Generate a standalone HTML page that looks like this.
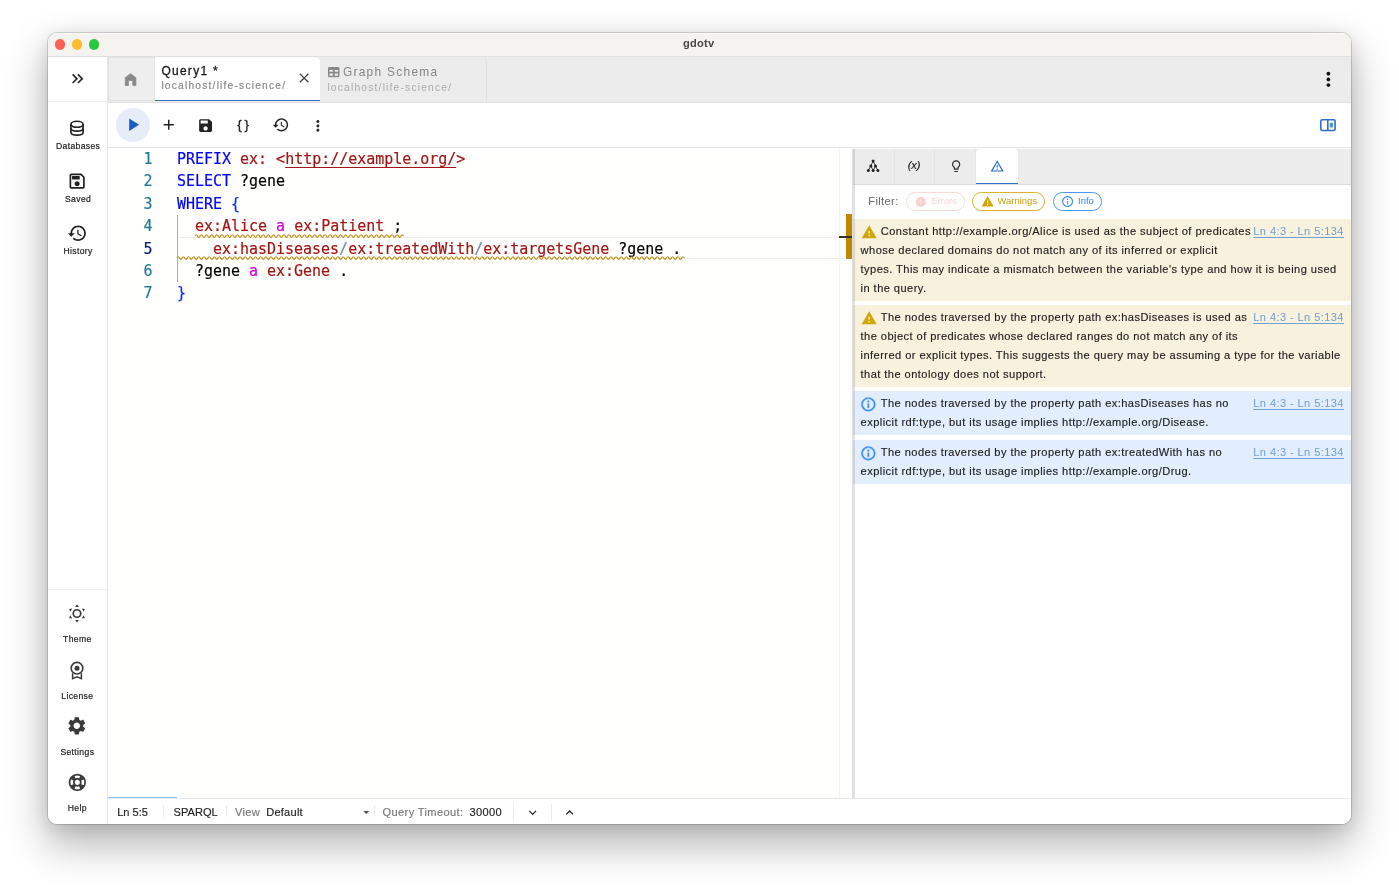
<!DOCTYPE html>
<html lang="en">
<head>
<meta charset="utf-8">
<title>gdotv</title>
<style>
*{box-sizing:border-box;margin:0;padding:0}
html,body{width:1399px;height:888px;overflow:hidden;background:#fff}
body{position:relative;font-family:"Liberation Sans",Arial,Helvetica,sans-serif;color:#222}
.abs{position:absolute}
svg{display:block;position:absolute;overflow:visible}
#win{position:absolute;left:48px;top:33px;width:1302.6px;height:790.6px;border-radius:9px;background:#fff;
  box-shadow:0 0 0 1px rgba(0,0,0,.14),0 19px 40px 2px rgba(0,0,0,.29),0 3px 18px rgba(0,0,0,.11);}
#clip{position:absolute;left:0;top:0;right:0;bottom:0;border-radius:9px;overflow:hidden}
#page{position:absolute;left:-48px;top:-33px;width:1399px;height:888px;will-change:transform}
#titlebar{left:48px;top:33px;width:1304px;height:23.5px;background:#f5f3ef;border-bottom:1px solid #e2e0dc;border-top:1px solid #fbfaf8}
.tl{position:absolute;top:39.3px;width:10.3px;height:10.3px;border-radius:50%}
#title{left:682.9px;top:37.2px;font-size:11.1px;font-weight:bold;color:#484848;line-height:13px;letter-spacing:.25px;white-space:nowrap}
#side{left:48px;top:56.5px;width:60.3px;height:768px;background:#fff;border-right:1.5px solid #e6e6e6}
.slabel{position:absolute;left:48.6px;width:59px;text-align:center;font-size:8.6px;letter-spacing:.36px;color:#222;-webkit-text-stroke:.2px #222;line-height:10px;white-space:nowrap}
#tabbar{left:108px;top:56.5px;width:1244px;height:46.1px;background:#ececec;border-bottom:1.5px solid #e0e0e0}
#hometab{left:108px;top:56.8px;width:46.5px;height:44.4px;background:#eeeeee;border:1.1px solid #e2e2e2}
#tab1{left:154.5px;top:57.2px;width:165.4px;height:43.9px;background:#fff;border-radius:0 5px 0 0;border-bottom:1.8px solid #3474c8}
#tab2{left:320.5px;top:57.2px;width:166px;height:43.6px;border-right:1px solid #e0e0e0;border-radius:0 5px 0 0}
.ttitle{position:absolute;font-size:11.95px;letter-spacing:1.3px;line-height:14px;white-space:nowrap}
.tsub{position:absolute;font-size:10.24px;letter-spacing:1.2px;line-height:12px;white-space:nowrap}
#toolbar{left:108px;top:102.5px;width:1244px;height:45.5px;background:#fff;border-bottom:1.3px solid #e3e3e3}
#playbg{left:116.2px;top:108.3px;width:33.4px;height:33.4px;border-radius:50%;background:#e6edf8}
#editor{left:108px;top:148.5px;width:745px;height:649px;background:#fffffe}
.mono{font-family:"DejaVu Sans Mono","Liberation Mono",monospace;font-size:14.96px;line-height:22.4px;white-space:pre;-webkit-text-stroke:.2px}
.ln{position:absolute;left:108px;width:44.5px;text-align:right;color:#237893}
.cl{position:absolute;left:177.05px;color:#000}
.k{color:#0000ff}.p{color:#a31515}.b{color:#0431fa}.a{color:#d400d4}.s{color:#7a8ba0}
.u{text-decoration:underline;text-underline-offset:2.5px;text-decoration-thickness:1.2px;text-decoration-skip-ink:none}
#rtabs{left:853px;top:148.5px;width:499.3px;height:36.3px;background:#ececec;border-bottom:1.3px solid #dcdcdc}
.rsep{position:absolute;top:148.5px;width:1px;height:35px;background:#e5e5e5}
#rtab4{left:975.7px;top:149.2px;width:42.3px;height:35.2px;background:#fff;border-radius:4.5px 4.5px 0 0;border-bottom:1.8px solid #2f6fc6}
.chip{position:absolute;top:192px;height:18.8px;border-radius:9.4px;border:1.2px solid;font-size:9.4px;line-height:16.6px;white-space:nowrap}
.msg{position:absolute;left:853px;width:498.8px}
.warnbg{background:#f8f1dd}
.infobg{background:#e2eefd}
.mt{position:absolute;font-size:11.09px;letter-spacing:.44px;line-height:18.7px;color:#222;-webkit-text-stroke:.15px #222;white-space:nowrap}
.lnk{position:absolute;left:1253.3px;font-size:11.09px;letter-spacing:.4px;line-height:18.7px;color:#6e9fd6;text-decoration:underline;text-underline-offset:1.5px;white-space:nowrap}
#status{left:108px;top:797.5px;width:1244px;height:27px;background:#fff;border-top:1px solid #e8e8e8}
.st{position:absolute;top:804.7px;font-size:11.09px;line-height:14px;color:#222;-webkit-text-stroke:.15px;white-space:nowrap}
.vsep{position:absolute;width:1px;background:#ebebeb}
</style>
</head>
<body>
<div id="win"><div id="clip"><div id="page">
<!-- title bar -->
<div id="titlebar" class="abs"></div>
<div class="tl" style="left:54.7px;background:#ff5f57"></div>
<div class="tl" style="left:71.8px;background:#febc2e"></div>
<div class="tl" style="left:88.8px;background:#28c840"></div>
<div id="title" class="abs">gdotv</div>
<!-- sidebar -->
<div id="side" class="abs"></div>
<div class="abs" style="left:48px;top:101.3px;width:59px;height:1px;background:#f0f0f0"></div>
<div class="abs" style="left:48px;top:588.5px;width:59px;height:1px;background:#f0f0f0"></div>
<svg style="left:67.90px;top:69.00px" width="19.4" height="19.4" viewBox="0 0 24 24"><path d="M6.41 6L5 7.41 9.58 12 5 16.59 6.41 18l6-6z M13 6l-1.41 1.41L16.17 12l-4.58 4.59L13 18l6-6z" fill="#222"/></svg>
<svg style="left:69.3px;top:119.5px" width="16" height="16.6" viewBox="0 0 16 16.6"><g fill="none" stroke="#222" stroke-width="1.65"><ellipse cx="8" cy="4.3" rx="6.1" ry="3"/><path d="M1.9 4.3v8c0 1.6 2.7 2.9 6.1 2.9s6.1-1.3 6.1-2.9v-8"/><path d="M1.9 8.3c0 1.6 2.7 2.9 6.1 2.9s6.1-1.3 6.1-2.9"/></g></svg>
<svg style="left:67.15px;top:170.55px" width="20.3" height="20.3" viewBox="0 0 24 24"><path d="M17 3H5c-1.11 0-2 .9-2 2v14c0 1.1.89 2 2 2h14c1.1 0 2-.9 2-2V7l-4-4zm2 16H5V5h11.17L19 7.83V19zm-7-7c-1.66 0-3 1.34-3 3s1.34 3 3 3 3-1.34 3-3-1.34-3-3-3zM6 6h9v4H6z" fill="#222"/></svg>
<svg style="left:67.00px;top:222.50px" width="20.6" height="20.6" viewBox="0 0 24 24"><path d="M13 3c-4.97 0-9 4.03-9 9H1l3.89 3.89.07.14L9 12H6c0-3.87 3.13-7 7-7s7 3.13 7 7-3.13 7-7 7c-1.93 0-3.68-.79-4.94-2.06l-1.42 1.42C8.27 19.99 10.51 21 13 21c4.97 0 9-4.03 9-9s-4.03-9-9-9zm-1 5v5l4.28 2.54.72-1.21-3.5-2.08V8H12z" fill="#222"/></svg>
<svg style="left:68.05px;top:603.9px" width="18" height="19" viewBox="0 0 18 19"><circle cx="9" cy="9.5" r="3.75" fill="none" stroke="#3a3a3a" stroke-width="1.7"/><path d="M9.00 0.40L10.90 2.90L7.10 2.90zM16.88 4.95L15.67 7.85L13.77 4.55zM16.88 14.05L13.77 14.45L15.67 11.15zM9.00 18.60L7.10 16.10L10.90 16.10zM1.12 14.05L2.33 11.15L4.23 14.45zM1.12 4.95L4.23 4.55L2.33 7.85z" fill="#3a3a3a"/></svg>
<svg style="left:68.2px;top:659.6px" width="18" height="21" viewBox="0 0 18 21"><circle cx="9" cy="8.2" r="5.8" fill="none" stroke="#3a3a3a" stroke-width="1.6"/><circle cx="9" cy="8.2" r="2.5" fill="#3a3a3a"/><path d="M4.6 13.2V18.6L9 16.7L13.4 18.6V13.2" fill="none" stroke="#3a3a3a" stroke-width="1.5"/></svg>
<svg style="left:66.30px;top:715.40px" width="21.6" height="21.6" viewBox="0 0 24 24"><path d="M19.14 12.94c.04-.3.06-.61.06-.94 0-.32-.02-.64-.07-.94l2.03-1.58c.18-.14.23-.41.12-.61l-1.92-3.32c-.12-.22-.37-.29-.59-.22l-2.39.96c-.5-.38-1.03-.7-1.62-.94l-.36-2.54c-.04-.24-.24-.41-.48-.41h-3.84c-.24 0-.43.17-.47.41l-.36 2.54c-.59.24-1.13.57-1.62.94l-2.39-.96c-.22-.08-.47 0-.59.22L2.74 8.87c-.12.21-.08.47.12.61l2.03 1.58c-.05.3-.09.63-.09.94s.02.64.07.94l-2.03 1.58c-.18.14-.23.41-.12.61l1.92 3.32c.12.22.37.29.59.22l2.39-.96c.5.38 1.03.7 1.62.94l.36 2.54c.05.24.24.41.48.41h3.84c.24 0 .44-.17.47-.41l.36-2.54c.59-.24 1.13-.56 1.62-.94l2.39.96c.22.08.47 0 .59-.22l1.92-3.32c.12-.22.07-.47-.12-.61l-2.01-1.58zM12 15.6c-1.98 0-3.6-1.62-3.6-3.6s1.62-3.6 3.6-3.6 3.6 1.62 3.6 3.6-1.62 3.6-3.6 3.6z" fill="#3a3a3a"/></svg>
<svg style="left:67.15px;top:771.75px" width="20.7" height="20.7" viewBox="0 0 24 24"><path d="M12 2C6.48 2 2 6.48 2 12s4.48 10 10 10 10-4.48 10-10S17.52 2 12 2zm7.46 7.12l-2.78 1.15c-.51-1.36-1.58-2.44-2.95-2.94l1.15-2.78c2.1.8 3.77 2.47 4.58 4.57zM12 15c-1.66 0-3-1.34-3-3s1.34-3 3-3 3 1.34 3 3-1.34 3-3 3zM9.13 4.54l1.17 2.78c-1.38.5-2.47 1.59-2.98 2.97L4.54 9.13c.81-2.11 2.48-3.78 4.59-4.59zM4.54 14.87l2.78-1.15c.51 1.38 1.59 2.46 2.97 2.96l-1.17 2.78c-2.1-.81-3.77-2.48-4.58-4.59zm10.34 4.59l-1.15-2.78c1.37-.51 2.45-1.59 2.95-2.97l2.78 1.17c-.81 2.1-2.48 3.77-4.58 4.58z" fill="#3a3a3a" transform="rotate(45 12 12)"/></svg>
<div class="slabel" style="top:141px">Databases</div>
<div class="slabel" style="top:193.5px">Saved</div>
<div class="slabel" style="top:246px">History</div>
<div class="slabel" style="top:634px;left:47.85px">Theme</div>
<div class="slabel" style="top:690.5px;left:47.85px">License</div>
<div class="slabel" style="top:746.5px;left:47.85px">Settings</div>
<div class="slabel" style="top:803px;left:47.85px">Help</div>
<!-- tab bar -->
<div id="tabbar" class="abs"></div>
<div id="hometab" class="abs"></div>
<div id="tab1" class="abs"></div>
<div id="tab2" class="abs"></div>
<svg style="left:122.15px;top:71.05px" width="17.2" height="17.2" viewBox="0 0 24 24"><path d="M4.6 20.2V9.3l7.4-5.6 7.4 5.6v10.9h-4.3v-7.1h-6.2v7.1z" fill="#8a8a8a" stroke="#8a8a8a" stroke-width="1.2" stroke-linejoin="round"/></svg>
<svg style="left:295.80px;top:69.90px" width="16.2" height="16.2" viewBox="0 0 24 24"><path d="M19 6.41L17.59 5 12 10.59 6.41 5 5 6.41 10.59 12 5 17.59 6.41 19 12 13.41 17.59 19 19 17.59 13.41 12z" fill="#444"/></svg>
<svg style="left:328.2px;top:67.3px" width="11.5" height="10.3" viewBox="0 0 11.5 10.3"><path d="M1.5 0h8.5a1.5 1.5 0 0 1 1.5 1.5v7.3a1.5 1.5 0 0 1-1.5 1.5h-8.5a1.5 1.5 0 0 1-1.5-1.5v-7.3a1.5 1.5 0 0 1 1.5-1.5zM1.5 2.9v1.9h3.3v-1.9zM6.7 2.9v1.9h3.3v-1.9zM1.5 6.6v2.2h3.3v-2.2zM6.7 6.6v2.2h3.3v-2.2z" fill="#8a8a8a" fill-rule="evenodd"/></svg>
<svg style="left:1317.10px;top:67.50px" width="22.8" height="22.8" viewBox="0 0 24 24"><path d="M12 8c1.1 0 2-.9 2-2s-.9-2-2-2-2 .9-2 2 .9 2 2 2zm0 2c-1.1 0-2 .9-2 2s.9 2 2 2 2-.9 2-2-.9-2-2-2zm0 6c-1.1 0-2 .9-2 2s.9 2 2 2 2-.9 2-2-.9-2-2-2z" fill="#111"/></svg>
<div class="ttitle" style="left:161.4px;top:64px;color:#1a1a1a;-webkit-text-stroke:.3px #1a1a1a">Query1 *</div>
<div class="tsub" style="left:161.4px;top:79.5px;color:#858585;-webkit-text-stroke:.15px #858585">localhost/life-science/</div>
<div class="ttitle" style="left:342.9px;top:65px;color:#868686;letter-spacing:1.27px">Graph Schema</div>
<div class="tsub" style="left:327.4px;top:81.9px;color:#ababab">localhost/life-science/</div>
<!-- toolbar -->
<div id="toolbar" class="abs"></div>
<div id="playbg" class="abs"></div>
<svg style="left:121.80px;top:114.30px" width="21.6" height="21.6" viewBox="0 0 24 24"><path d="M8 5v14l11-7z" fill="#1a5fc4"/></svg>
<svg style="left:159.85px;top:116.25px" width="17.5" height="17.5" viewBox="0 0 24 24"><path d="M19 13h-6v6h-2v-6H5v-2h6V5h2v6h6v2z" fill="#222"/></svg>
<svg style="left:197.20px;top:116.90px" width="17.2" height="17.2" viewBox="0 0 24 24"><path d="M17 3H5c-1.11 0-2 .9-2 2v14c0 1.1.89 2 2 2h14c1.1 0 2-.9 2-2V7l-4-4zm-5 16c-1.66 0-3-1.34-3-3s1.34-3 3-3 3 1.34 3 3-1.34 3-3 3zm3-10H5V5h10v4z" fill="#222"/></svg>
<svg style="left:272.20px;top:116.20px" width="17.6" height="17.6" viewBox="0 0 24 24"><path d="M13 3c-4.97 0-9 4.03-9 9H1l3.89 3.89.07.14L9 12H6c0-3.87 3.13-7 7-7s7 3.13 7 7-3.13 7-7 7c-1.93 0-3.68-.79-4.94-2.06l-1.42 1.42C8.27 19.99 10.51 21 13 21c4.97 0 9-4.03 9-9s-4.03-9-9-9zm-1 5v5l4.28 2.54.72-1.21-3.5-2.08V8H12z" fill="#222"/></svg>
<svg style="left:309.30px;top:116.50px" width="17.8" height="17.8" viewBox="0 0 24 24"><path d="M12 8c1.1 0 2-.9 2-2s-.9-2-2-2-2 .9-2 2 .9 2 2 2zm0 2c-1.1 0-2 .9-2 2s.9 2 2 2 2-.9 2-2-.9-2-2-2zm0 6c-1.1 0-2 .9-2 2s.9 2 2 2 2-.9 2-2-.9-2-2-2z" fill="#222"/></svg>
<svg style="left:1320.1px;top:119.3px" width="15.9" height="12.3" viewBox="0 0 15.9 12.3"><rect x=".8" y=".8" width="14.3" height="10.7" rx="1.5" fill="none" stroke="#2a6fc9" stroke-width="1.6"/><path d="M7.8 1v10.3" stroke="#2a6fc9" stroke-width="1.6"/><rect x="9.7" y="3.8" width="3.4" height="4.7" fill="#5d8fd6"/></svg>
<div class="abs" style="left:237.2px;top:116.5px;font-size:13.5px;letter-spacing:2.7px;line-height:16px;color:#222;-webkit-text-stroke:.3px #222">{}</div>
<!-- editor -->
<div id="editor" class="abs"></div>
<div class="abs" style="left:177px;top:237px;width:668px;height:22px;border-top:1.6px solid #eeeeee;border-bottom:1.6px solid #eeeeee"></div>
<div class="abs" style="left:177px;top:214.6px;width:1px;height:67.4px;background:#adadad"></div>
<div class="ln mono" style="top:148.00px">1</div>
<div class="ln mono" style="top:170.40px">2</div>
<div class="ln mono" style="top:192.80px">3</div>
<div class="ln mono" style="top:215.20px">4</div>
<div class="ln mono" style="top:237.60px;color:#0b216f">5</div>
<div class="ln mono" style="top:260.00px">6</div>
<div class="ln mono" style="top:282.40px">7</div>
<div class="cl mono" style="top:148.00px"><span class="k">PREFIX</span> <span class="p">ex:</span> <span class="p">&lt;<span class="u">http://example.org/</span>&gt;</span></div>
<div class="cl mono" style="top:170.40px"><span class="k">SELECT</span> ?gene</div>
<div class="cl mono" style="top:192.80px"><span class="k">WHERE</span> <span class="b">{</span></div>
<div class="cl mono" style="top:215.20px">  <span class="p">ex:Alice</span> <span class="a">a</span> <span class="p">ex:Patient</span> ;</div>
<div class="cl mono" style="top:237.60px">    <span class="p">ex:hasDiseases</span><span class="s">/</span><span class="p">ex:treatedWith</span><span class="s">/</span><span class="p">ex:targetsGene</span> ?gene .</div>
<div class="cl mono" style="top:260.00px">  ?gene <span class="a">a</span> <span class="p">ex:Gene</span> .</div>
<div class="cl mono" style="top:282.40px"><span class="b">}</span></div>
<svg style="left:194.9px;top:233.8px" width="207" height="4" viewBox="0 0 207 4"><path d="M0 2.00 Q1.29 -0.60 2.58 2.00 Q3.86 4.60 5.15 2.00 Q6.44 -0.60 7.73 2.00 Q9.01 4.60 10.30 2.00 Q11.59 -0.60 12.88 2.00 Q14.16 4.60 15.45 2.00 Q16.74 -0.60 18.02 2.00 Q19.31 4.60 20.60 2.00 Q21.89 -0.60 23.17 2.00 Q24.46 4.60 25.75 2.00 Q27.04 -0.60 28.32 2.00 Q29.61 4.60 30.90 2.00 Q32.19 -0.60 33.47 2.00 Q34.76 4.60 36.05 2.00 Q37.34 -0.60 38.62 2.00 Q39.91 4.60 41.20 2.00 Q42.49 -0.60 43.78 2.00 Q45.06 4.60 46.35 2.00 Q47.64 -0.60 48.93 2.00 Q50.21 4.60 51.50 2.00 Q52.79 -0.60 54.08 2.00 Q55.36 4.60 56.65 2.00 Q57.94 -0.60 59.23 2.00 Q60.51 4.60 61.80 2.00 Q63.09 -0.60 64.38 2.00 Q65.66 4.60 66.95 2.00 Q68.24 -0.60 69.53 2.00 Q70.81 4.60 72.10 2.00 Q73.39 -0.60 74.68 2.00 Q75.96 4.60 77.25 2.00 Q78.54 -0.60 79.83 2.00 Q81.11 4.60 82.40 2.00 Q83.69 -0.60 84.98 2.00 Q86.26 4.60 87.55 2.00 Q88.84 -0.60 90.13 2.00 Q91.41 4.60 92.70 2.00 Q93.99 -0.60 95.28 2.00 Q96.56 4.60 97.85 2.00 Q99.14 -0.60 100.43 2.00 Q101.71 4.60 103.00 2.00 Q104.29 -0.60 105.58 2.00 Q106.86 4.60 108.15 2.00 Q109.44 -0.60 110.73 2.00 Q112.01 4.60 113.30 2.00 Q114.59 -0.60 115.88 2.00 Q117.16 4.60 118.45 2.00 Q119.74 -0.60 121.03 2.00 Q122.31 4.60 123.60 2.00 Q124.89 -0.60 126.18 2.00 Q127.46 4.60 128.75 2.00 Q130.04 -0.60 131.33 2.00 Q132.61 4.60 133.90 2.00 Q135.19 -0.60 136.48 2.00 Q137.76 4.60 139.05 2.00 Q140.34 -0.60 141.63 2.00 Q142.91 4.60 144.20 2.00 Q145.49 -0.60 146.78 2.00 Q148.06 4.60 149.35 2.00 Q150.64 -0.60 151.92 2.00 Q153.21 4.60 154.50 2.00 Q155.79 -0.60 157.07 2.00 Q158.36 4.60 159.65 2.00 Q160.94 -0.60 162.22 2.00 Q163.51 4.60 164.80 2.00 Q166.09 -0.60 167.37 2.00 Q168.66 4.60 169.95 2.00 Q171.24 -0.60 172.52 2.00 Q173.81 4.60 175.10 2.00 Q176.39 -0.60 177.67 2.00 Q178.96 4.60 180.25 2.00 Q181.54 -0.60 182.82 2.00 Q184.11 4.60 185.40 2.00 Q186.69 -0.60 187.97 2.00 Q189.26 4.60 190.55 2.00 Q191.84 -0.60 193.12 2.00 Q194.41 4.60 195.70 2.00 Q196.99 -0.60 198.27 2.00 Q199.56 4.60 200.85 2.00 Q202.14 -0.60 203.42 2.00 Q204.71 4.60 206.00 2.00 Q207.29 -0.60 208.57 2.00" fill="none" stroke="#c08d0c" stroke-width="1.15"/></svg>
<svg style="left:177px;top:255.9px" width="505" height="4" viewBox="0 0 505 4"><path d="M0 2.00 Q1.29 -0.60 2.58 2.00 Q3.86 4.60 5.15 2.00 Q6.44 -0.60 7.73 2.00 Q9.01 4.60 10.30 2.00 Q11.59 -0.60 12.88 2.00 Q14.16 4.60 15.45 2.00 Q16.74 -0.60 18.02 2.00 Q19.31 4.60 20.60 2.00 Q21.89 -0.60 23.17 2.00 Q24.46 4.60 25.75 2.00 Q27.04 -0.60 28.32 2.00 Q29.61 4.60 30.90 2.00 Q32.19 -0.60 33.47 2.00 Q34.76 4.60 36.05 2.00 Q37.34 -0.60 38.62 2.00 Q39.91 4.60 41.20 2.00 Q42.49 -0.60 43.78 2.00 Q45.06 4.60 46.35 2.00 Q47.64 -0.60 48.93 2.00 Q50.21 4.60 51.50 2.00 Q52.79 -0.60 54.08 2.00 Q55.36 4.60 56.65 2.00 Q57.94 -0.60 59.23 2.00 Q60.51 4.60 61.80 2.00 Q63.09 -0.60 64.38 2.00 Q65.66 4.60 66.95 2.00 Q68.24 -0.60 69.53 2.00 Q70.81 4.60 72.10 2.00 Q73.39 -0.60 74.68 2.00 Q75.96 4.60 77.25 2.00 Q78.54 -0.60 79.83 2.00 Q81.11 4.60 82.40 2.00 Q83.69 -0.60 84.98 2.00 Q86.26 4.60 87.55 2.00 Q88.84 -0.60 90.13 2.00 Q91.41 4.60 92.70 2.00 Q93.99 -0.60 95.28 2.00 Q96.56 4.60 97.85 2.00 Q99.14 -0.60 100.43 2.00 Q101.71 4.60 103.00 2.00 Q104.29 -0.60 105.58 2.00 Q106.86 4.60 108.15 2.00 Q109.44 -0.60 110.73 2.00 Q112.01 4.60 113.30 2.00 Q114.59 -0.60 115.88 2.00 Q117.16 4.60 118.45 2.00 Q119.74 -0.60 121.03 2.00 Q122.31 4.60 123.60 2.00 Q124.89 -0.60 126.18 2.00 Q127.46 4.60 128.75 2.00 Q130.04 -0.60 131.33 2.00 Q132.61 4.60 133.90 2.00 Q135.19 -0.60 136.48 2.00 Q137.76 4.60 139.05 2.00 Q140.34 -0.60 141.63 2.00 Q142.91 4.60 144.20 2.00 Q145.49 -0.60 146.78 2.00 Q148.06 4.60 149.35 2.00 Q150.64 -0.60 151.92 2.00 Q153.21 4.60 154.50 2.00 Q155.79 -0.60 157.07 2.00 Q158.36 4.60 159.65 2.00 Q160.94 -0.60 162.22 2.00 Q163.51 4.60 164.80 2.00 Q166.09 -0.60 167.37 2.00 Q168.66 4.60 169.95 2.00 Q171.24 -0.60 172.52 2.00 Q173.81 4.60 175.10 2.00 Q176.39 -0.60 177.67 2.00 Q178.96 4.60 180.25 2.00 Q181.54 -0.60 182.82 2.00 Q184.11 4.60 185.40 2.00 Q186.69 -0.60 187.97 2.00 Q189.26 4.60 190.55 2.00 Q191.84 -0.60 193.12 2.00 Q194.41 4.60 195.70 2.00 Q196.99 -0.60 198.27 2.00 Q199.56 4.60 200.85 2.00 Q202.14 -0.60 203.42 2.00 Q204.71 4.60 206.00 2.00 Q207.29 -0.60 208.57 2.00 Q209.86 4.60 211.15 2.00 Q212.44 -0.60 213.72 2.00 Q215.01 4.60 216.30 2.00 Q217.59 -0.60 218.87 2.00 Q220.16 4.60 221.45 2.00 Q222.74 -0.60 224.02 2.00 Q225.31 4.60 226.60 2.00 Q227.89 -0.60 229.17 2.00 Q230.46 4.60 231.75 2.00 Q233.04 -0.60 234.32 2.00 Q235.61 4.60 236.90 2.00 Q238.19 -0.60 239.47 2.00 Q240.76 4.60 242.05 2.00 Q243.34 -0.60 244.62 2.00 Q245.91 4.60 247.20 2.00 Q248.49 -0.60 249.77 2.00 Q251.06 4.60 252.35 2.00 Q253.64 -0.60 254.92 2.00 Q256.21 4.60 257.50 2.00 Q258.79 -0.60 260.07 2.00 Q261.36 4.60 262.65 2.00 Q263.94 -0.60 265.22 2.00 Q266.51 4.60 267.80 2.00 Q269.09 -0.60 270.37 2.00 Q271.66 4.60 272.95 2.00 Q274.24 -0.60 275.52 2.00 Q276.81 4.60 278.10 2.00 Q279.39 -0.60 280.67 2.00 Q281.96 4.60 283.25 2.00 Q284.54 -0.60 285.82 2.00 Q287.11 4.60 288.40 2.00 Q289.69 -0.60 290.97 2.00 Q292.26 4.60 293.55 2.00 Q294.84 -0.60 296.12 2.00 Q297.41 4.60 298.70 2.00 Q299.99 -0.60 301.27 2.00 Q302.56 4.60 303.85 2.00 Q305.14 -0.60 306.42 2.00 Q307.71 4.60 309.00 2.00 Q310.29 -0.60 311.57 2.00 Q312.86 4.60 314.15 2.00 Q315.44 -0.60 316.72 2.00 Q318.01 4.60 319.30 2.00 Q320.59 -0.60 321.87 2.00 Q323.16 4.60 324.45 2.00 Q325.74 -0.60 327.02 2.00 Q328.31 4.60 329.60 2.00 Q330.89 -0.60 332.17 2.00 Q333.46 4.60 334.75 2.00 Q336.04 -0.60 337.32 2.00 Q338.61 4.60 339.90 2.00 Q341.19 -0.60 342.47 2.00 Q343.76 4.60 345.05 2.00 Q346.34 -0.60 347.62 2.00 Q348.91 4.60 350.20 2.00 Q351.49 -0.60 352.77 2.00 Q354.06 4.60 355.35 2.00 Q356.64 -0.60 357.92 2.00 Q359.21 4.60 360.50 2.00 Q361.79 -0.60 363.07 2.00 Q364.36 4.60 365.65 2.00 Q366.94 -0.60 368.22 2.00 Q369.51 4.60 370.80 2.00 Q372.09 -0.60 373.37 2.00 Q374.66 4.60 375.95 2.00 Q377.24 -0.60 378.52 2.00 Q379.81 4.60 381.10 2.00 Q382.39 -0.60 383.67 2.00 Q384.96 4.60 386.25 2.00 Q387.54 -0.60 388.82 2.00 Q390.11 4.60 391.40 2.00 Q392.69 -0.60 393.97 2.00 Q395.26 4.60 396.55 2.00 Q397.84 -0.60 399.12 2.00 Q400.41 4.60 401.70 2.00 Q402.99 -0.60 404.27 2.00 Q405.56 4.60 406.85 2.00 Q408.14 -0.60 409.42 2.00 Q410.71 4.60 412.00 2.00 Q413.29 -0.60 414.57 2.00 Q415.86 4.60 417.15 2.00 Q418.44 -0.60 419.72 2.00 Q421.01 4.60 422.30 2.00 Q423.59 -0.60 424.87 2.00 Q426.16 4.60 427.45 2.00 Q428.74 -0.60 430.02 2.00 Q431.31 4.60 432.60 2.00 Q433.89 -0.60 435.17 2.00 Q436.46 4.60 437.75 2.00 Q439.04 -0.60 440.32 2.00 Q441.61 4.60 442.90 2.00 Q444.19 -0.60 445.47 2.00 Q446.76 4.60 448.05 2.00 Q449.34 -0.60 450.62 2.00 Q451.91 4.60 453.20 2.00 Q454.49 -0.60 455.77 2.00 Q457.06 4.60 458.35 2.00 Q459.64 -0.60 460.92 2.00 Q462.21 4.60 463.50 2.00 Q464.79 -0.60 466.07 2.00 Q467.36 4.60 468.65 2.00 Q469.94 -0.60 471.22 2.00 Q472.51 4.60 473.80 2.00 Q475.09 -0.60 476.37 2.00 Q477.66 4.60 478.95 2.00 Q480.24 -0.60 481.52 2.00 Q482.81 4.60 484.10 2.00 Q485.39 -0.60 486.67 2.00 Q487.96 4.60 489.25 2.00 Q490.54 -0.60 491.82 2.00 Q493.11 4.60 494.40 2.00 Q495.69 -0.60 496.97 2.00 Q498.26 4.60 499.55 2.00 Q500.84 -0.60 502.12 2.00 Q503.41 4.60 504.70 2.00 Q505.99 -0.60 507.27 2.00" fill="none" stroke="#c08d0c" stroke-width="1.15"/></svg>
<div class="abs" style="left:839.1px;top:148.5px;width:1px;height:649px;background:#f3f3f3"></div>
<div class="abs" style="left:845.7px;top:214px;width:6.7px;height:44.6px;background:#bf8803"></div>
<div class="abs" style="left:839.3px;top:236px;width:13.1px;height:1.9px;background:#383224"></div>
<!-- right panel -->
<div id="rtabs" class="abs"></div>
<div class="rsep" style="left:893.5px"></div>
<div class="rsep" style="left:934.3px"></div>
<div class="rsep" style="left:975.2px"></div>
<div id="rtab4" class="abs"></div>
<svg style="left:866.3px;top:158.3px" width="14" height="15" viewBox="0 0 14 15"><path d="M7.15 3.10L2.40 12.60M7.15 3.10L11.90 12.60M4.90 7.90L7.15 12.60L9.50 7.90" stroke="#222" stroke-width=".85" fill="none"/><g fill="#222"><circle cx="7.15" cy="3.10" r="1.5"/><circle cx="4.90" cy="7.90" r="1.5"/><circle cx="9.50" cy="7.90" r="1.5"/><circle cx="2.40" cy="12.60" r="1.5"/><circle cx="7.15" cy="12.60" r="1.5"/><circle cx="11.90" cy="12.60" r="1.5"/></g></svg>
<div class="abs" style="left:907.7px;top:158px;font-size:11.09px;font-style:italic;letter-spacing:-.1px;line-height:14px;color:#1a1a1a;-webkit-text-stroke:.15px #1a1a1a">(x)</div>
<svg style="left:948.65px;top:158.95px" width="14.3" height="14.3" viewBox="0 0 24 24"><path d="M9 21c0 .55.45 1 1 1h4c.55 0 1-.45 1-1v-1H9v1zm3-19C8.14 2 5 5.14 5 9c0 2.38 1.19 4.47 3 5.74V17c0 .55.45 1 1 1h6c.55 0 1-.45 1-1v-2.26c1.81-1.27 3-3.36 3-5.74 0-3.86-3.14-7-7-7zm2.85 11.1l-.85.6V16h-4v-2.3l-.85-.6C7.8 12.16 7 10.63 7 9c0-2.76 2.24-5 5-5s5 2.24 5 5c0 1.63-.8 3.16-2.15 4.1z" fill="#2a2a2a"/></svg>
<svg style="left:989.90px;top:158.80px" width="14.4" height="14.4" viewBox="0 0 24 24"><path d="M12 5.99L19.53 19H4.47L12 5.99M12 2L1 21h22L12 2zm1 14h-2v2h2v-2zm0-6h-2v4h2v-4z" fill="#2a6fc9"/></svg>
<div class="abs" style="left:868.3px;top:195.3px;font-size:11.09px;letter-spacing:.37px;line-height:12px;color:#666">Filter:</div>
<div class="chip" style="left:905.8px;width:59px;border-color:#fbd9d5;color:#fad5d1"><span class="abs" style="left:24.6px;top:0">Errors</span></div>
<svg style="left:915.10px;top:195.50px" width="11.8" height="11.8" viewBox="0 0 24 24"><path d="M12 2C6.48 2 2 6.48 2 12s4.48 10 10 10 10-4.48 10-10S17.52 2 12 2zm1 15h-2v-2h2v2zm0-4h-2V7h2v6z" fill="#f9d0cb"/></svg>
<div class="chip" style="left:972.4px;width:72.9px;border-color:#d9b42c;color:#c9a008"><span class="abs" style="left:24.2px;top:0">Warnings</span></div>
<svg style="left:981.00px;top:194.50px" width="13.2" height="13.2" viewBox="0 0 24 24"><path d="M1 21h22L12 2 1 21zm12-3h-2v-2h2v2zm0-4h-2v-4h2v4z" fill="#d2a60a"/></svg>
<div class="chip" style="left:1052.8px;width:49.3px;border-color:#4a9af5;color:#2d85ea"><span class="abs" style="left:24.3px;top:0">Info</span></div>
<svg style="left:1061.00px;top:194.90px" width="13.2" height="13.2" viewBox="0 0 24 24"><path d="M11 7h2v2h-2zm0 4h2v6h-2zm1-9C6.48 2 2 6.48 2 12s4.48 10 10 10 10-4.48 10-10S17.52 2 12 2zm0 18c-4.41 0-8-3.59-8-8s3.59-8 8-8 8 3.59 8 8-3.59 8-8 8z" fill="#3b8ff5"/></svg>
<div class="msg warnbg" style="top:218.6px;height:82.0px"></div>
<svg style="left:860.90px;top:223.80px" width="16.4" height="16.4" viewBox="0 0 24 24"><path d="M1 21h22L12 2 1 21zm12-3h-2v-2h2v2zm0-4h-2v-4h2v4z" fill="#d2a60a"/></svg>
<div class="mt" style="left:880.8px;top:222.30px">Constant http://example.org/Alice is used as the subject of predicates</div>
<div class="mt" style="left:860.6px;top:241.07px">whose declared domains do not match any of its inferred or explicit</div>
<div class="mt" style="left:860.6px;top:259.84px">types. This may indicate a mismatch between the variable's type and how it is being used</div>
<div class="mt" style="left:860.6px;top:278.61px">in the query.</div>
<div class="lnk" style="top:222.30px">Ln 4:3 - Ln 5:134</div>
<div class="msg warnbg" style="top:304.5px;height:82.2px"></div>
<svg style="left:860.90px;top:309.70px" width="16.4" height="16.4" viewBox="0 0 24 24"><path d="M1 21h22L12 2 1 21zm12-3h-2v-2h2v2zm0-4h-2v-4h2v4z" fill="#d2a60a"/></svg>
<div class="mt" style="left:880.8px;top:308.20px">The nodes traversed by the property path ex:hasDiseases is used as</div>
<div class="mt" style="left:860.6px;top:326.97px">the object of predicates whose declared ranges do not match any of its</div>
<div class="mt" style="left:860.6px;top:345.74px">inferred or explicit types. This suggests the query may be assuming a type for the variable</div>
<div class="mt" style="left:860.6px;top:364.51px">that the ontology does not support.</div>
<div class="lnk" style="top:308.20px">Ln 4:3 - Ln 5:134</div>
<div class="msg infobg" style="top:390.7px;height:44.6px"></div>
<svg style="left:860.15px;top:395.95px" width="16.7" height="16.7" viewBox="0 0 24 24"><path d="M11 7h2v2h-2zm0 4h2v6h-2zm1-9C6.48 2 2 6.48 2 12s4.48 10 10 10 10-4.48 10-10S17.52 2 12 2zm0 18c-4.41 0-8-3.59-8-8s3.59-8 8-8 8 3.59 8 8-3.59 8-8 8z" fill="#3b8ff5" stroke="#3b8ff5" stroke-width=".5"/></svg>
<div class="mt" style="left:880.8px;top:394.40px">The nodes traversed by the property path ex:hasDiseases has no</div>
<div class="mt" style="left:860.6px;top:413.17px">explicit rdf:type, but its usage implies http://example.org/Disease.</div>
<div class="lnk" style="top:394.40px">Ln 4:3 - Ln 5:134</div>
<div class="msg infobg" style="top:439.5px;height:44.8px"></div>
<svg style="left:860.15px;top:444.75px" width="16.7" height="16.7" viewBox="0 0 24 24"><path d="M11 7h2v2h-2zm0 4h2v6h-2zm1-9C6.48 2 2 6.48 2 12s4.48 10 10 10 10-4.48 10-10S17.52 2 12 2zm0 18c-4.41 0-8-3.59-8-8s3.59-8 8-8 8 3.59 8 8-3.59 8-8 8z" fill="#3b8ff5" stroke="#3b8ff5" stroke-width=".5"/></svg>
<div class="mt" style="left:880.8px;top:443.20px">The nodes traversed by the property path ex:treatedWith has no</div>
<div class="mt" style="left:860.6px;top:461.97px">explicit rdf:type, but its usage implies http://example.org/Drug.</div>
<div class="lnk" style="top:443.20px">Ln 4:3 - Ln 5:134</div>
<div class="abs" style="left:852.3px;top:148.5px;width:2.5px;height:649px;background:rgba(0,0,0,.115)"></div>
<!-- status bar -->
<div id="status" class="abs"></div>
<div class="abs" style="left:108px;top:796.6px;width:68.8px;height:1.5px;background:#8ec5f7"></div>
<div class="st" style="left:117.2px">Ln 5:5</div>
<div class="vsep" style="left:163px;top:806.4px;height:10.2px"></div>
<div class="st" style="left:173.6px">SPARQL</div>
<div class="vsep" style="left:226.3px;top:806.4px;height:10.2px"></div>
<div class="st" style="left:235.1px;color:#767676;letter-spacing:.3px">View</div>
<div class="st" style="left:266.2px;letter-spacing:.23px">Default</div>
<svg style="left:358.65px;top:805.15px" width="14.5" height="14.5" viewBox="0 0 24 24"><path d="M7 10l5 5 5-5z" fill="#555"/></svg>
<div class="vsep" style="left:374.3px;top:806.4px;height:10.2px"></div>
<div class="st" style="left:382.6px;color:#767676;letter-spacing:.36px">Query Timeout:</div>
<div class="st" style="left:469.5px;letter-spacing:.32px">30000</div>
<div class="vsep" style="left:513.3px;top:803.9px;height:17.6px"></div>
<svg style="left:524.65px;top:804.65px" width="15.3" height="15.3" viewBox="0 0 24 24"><path d="M16.59 8.59L12 13.17 7.41 8.59 6 10l6 6 6-6z" fill="#222"/></svg>
<div class="vsep" style="left:550.8px;top:803.9px;height:17.6px"></div>
<svg style="left:562.15px;top:804.65px" width="15.3" height="15.3" viewBox="0 0 24 24"><path d="M12 8l-6 6 1.41 1.41L12 10.83l4.59 4.58L18 14z" fill="#222"/></svg>

</div></div></div>
</body>
</html>
